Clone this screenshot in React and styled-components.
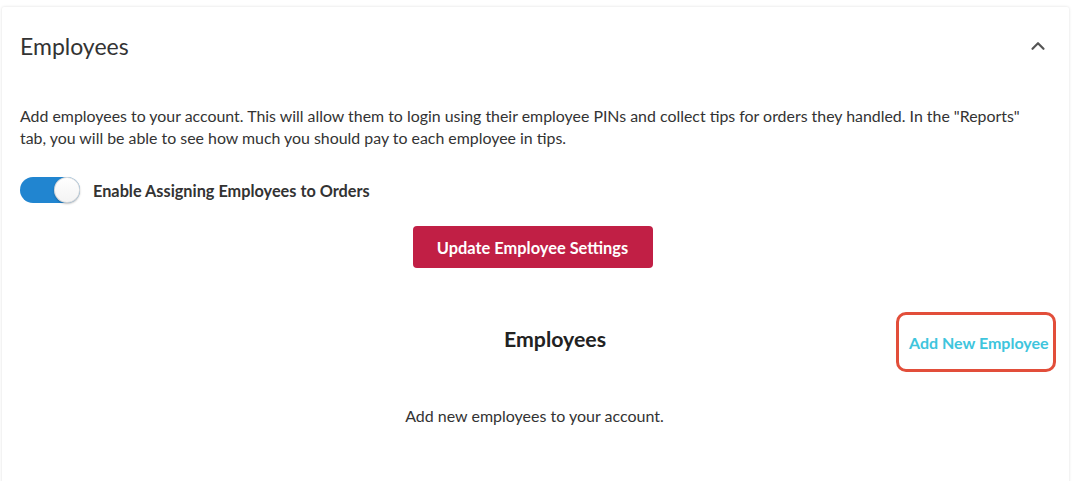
import React from "react";
import styled, { createGlobalStyle } from "styled-components";
import { ChevronUp } from "lucide-react";

const GlobalStyle = createGlobalStyle`
  body {
    margin: 0;
    background: #fff;
    font-family: Lato, "Open Sans", sans-serif;
    color: #333;
  }
`;

const Page = styled.div`
  padding: 7px 4px 0 2px;
  height: 481px;
  box-sizing: border-box;
  overflow: hidden;
`;

const Card = styled.section`
  background: #fff;
  box-shadow: 0 0 3px rgba(0, 0, 0, 0.14);
  border-radius: 2px;
  min-height: 520px;
  padding: 0 20px 0 18px;
`;

const Header = styled.div`
  display: flex;
  align-items: center;
  justify-content: space-between;
  height: 78px;
`;

const Title = styled.h2`
  margin: 0;
  font-size: 23px;
  font-weight: 400;
  color: #333;
`;

const Collapse = styled.button`
  display: flex;
  border: 0;
  background: none;
  padding: 0;
  color: #555;
  cursor: pointer;
`;

const Description = styled.p`
  margin: 20px 0 0;
  padding-right: 12px;
  font-size: 15.9px;
  line-height: 22px;
`;

const ToggleRow = styled.label`
  display: flex;
  align-items: center;
  gap: 13px;
  margin-top: 28px;
  font-size: 16.3px;
  font-weight: 700;
  cursor: pointer;
`;

const Track = styled.span`
  position: relative;
  width: 60px;
  height: 26px;
  border-radius: 13px;
  background: ${(p) => (p.on ? "#2185d0" : "#ccc")};
`;

const Knob = styled.span`
  position: absolute;
  top: 0;
  right: ${(p) => (p.on ? "0" : "34px")};
  width: 26px;
  height: 26px;
  border-radius: 50%;
  background: linear-gradient(#fff, #f3f3f3);
  box-shadow: 0 1px 2px rgba(0, 0, 0, 0.25), inset 0 0 0 1px rgba(34, 36, 38, 0.15);
`;

const Actions = styled.div`
  display: flex;
  justify-content: center;
  margin-top: 23px;
  padding-right: 4px;
`;

const PrimaryButton = styled.button`
  width: 240px;
  height: 42px;
  border: 0;
  border-radius: 4px;
  background: #c11f45;
  color: #fff;
  font-family: inherit;
  font-size: 16.4px;
  font-weight: 700;
  cursor: pointer;
`;

const ListHeader = styled.div`
  display: grid;
  grid-template-columns: 1fr auto 1fr;
  align-items: start;
  margin: 44px -7px 0 0;
`;

const ListTitle = styled.h3`
  grid-column: 2;
  margin: 14px 0 0;
  padding-left: 34px;
  font-size: 21.3px;
  font-weight: 700;
  color: #222;
`;

const AddLink = styled.a`
  justify-self: end;
  display: flex;
  align-items: center;
  box-sizing: border-box;
  width: 160px;
  height: 60px;
  padding-left: 10px;
  border: 3px solid #e24e3a;
  border-radius: 10px;
  color: #3ec5dd;
  font-size: 16px;
  font-weight: 700;
  white-space: nowrap;
  text-decoration: none;
  cursor: pointer;
`;

const Empty = styled.p`
  margin: 34px 0 0;
  text-align: center;
  font-size: 16px;
`;

export default function App() {
  const on = true;
  return (
    <Page>
      <GlobalStyle />
      <Card>
        <Header>
          <Title>Employees</Title>
          <Collapse aria-label="Collapse">
            <ChevronUp size={22} strokeWidth={2.4} />
          </Collapse>
        </Header>
        <Description>
          Add employees to your account. This will allow them to login using their employee PINs and
          collect tips for orders they handled. In the "Reports" tab, you will be able to see how much
          you should pay to each employee in tips.
        </Description>
        <ToggleRow>
          <Track on={on}>
            <Knob on={on} />
          </Track>
          Enable Assigning Employees to Orders
        </ToggleRow>
        <Actions>
          <PrimaryButton>Update Employee Settings</PrimaryButton>
        </Actions>
        <ListHeader>
          <ListTitle>Employees</ListTitle>
          <AddLink>Add New Employee</AddLink>
        </ListHeader>
        <Empty>Add new employees to your account.</Empty>
      </Card>
    </Page>
  );
}
